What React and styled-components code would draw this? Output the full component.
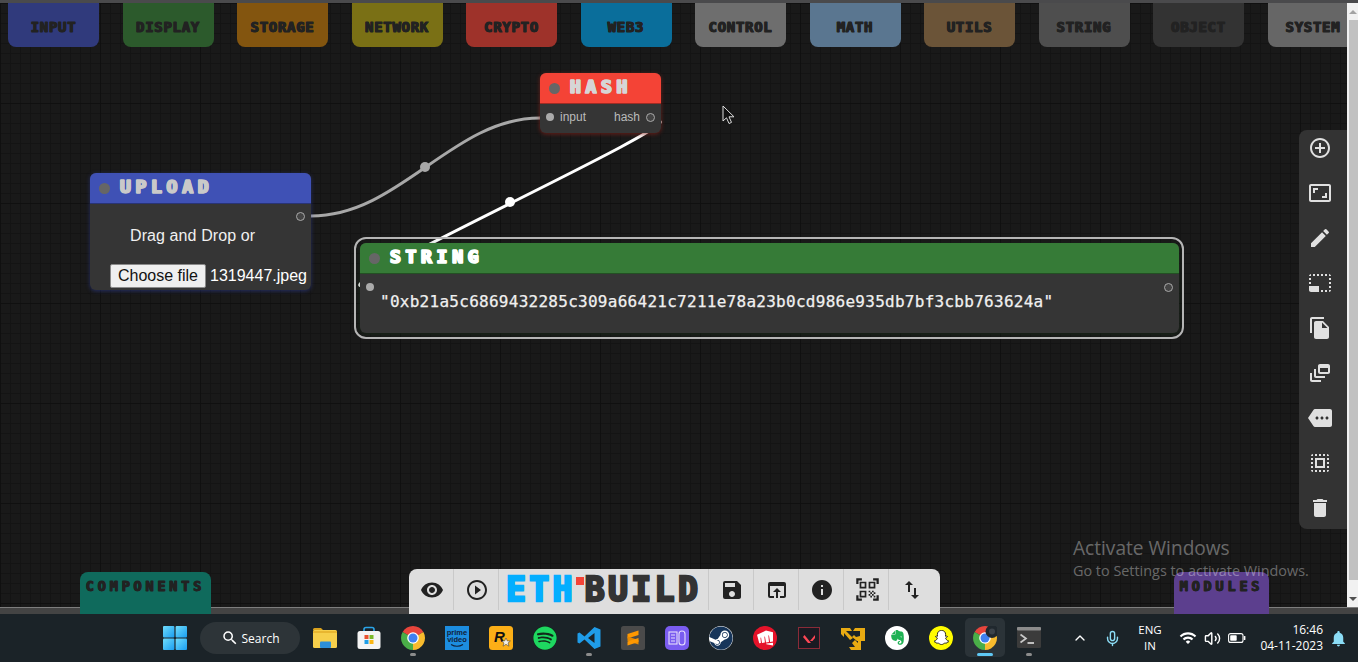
import styled, { createGlobalStyle } from "styled-components";
import {
  MdAddCircleOutline,
  MdAspectRatio,
  MdEdit,
  MdPhotoSizeSelectSmall,
  MdFileCopy,
  MdDynamicFeed,
  MdMore,
  MdSelectAll,
  MdDelete,
  MdRemoveRedEye,
  MdPlayCircleOutline,
  MdSave,
  MdOpenInBrowser,
  MdInfo,
  MdQrCodeScanner,
  MdImportExport,
  MdNotifications,
  MdSearch,
  MdWifi,
} from "react-icons/md";
import { FaSpotify, FaSteam, FaEvernote, FaSnapchatGhost } from "react-icons/fa";
import { SiRiotgames } from "react-icons/si";
import { LuChevronUp, LuMic, LuVolume2 } from "react-icons/lu";

const CATEGORIES = [
  ["INPUT", "#303a7c"],
  ["DISPLAY", "#2c5a2c"],
  ["STORAGE", "#83550f"],
  ["NETWORK", "#7a7015"],
  ["CRYPTO", "#9e322a"],
  ["WEB3", "#0a6e9b"],
  ["CONTROL", "#6e6e6e"],
  ["MATH", "#5a7690"],
  ["UTILS", "#6b5438"],
  ["STRING", "#4e4e4e"],
  ["OBJECT", "#333333"],
  ["SYSTEM", "#666666"],
];

const SIDE_TOOLS = [
  MdAddCircleOutline,
  MdAspectRatio,
  MdEdit,
  MdPhotoSizeSelectSmall,
  MdFileCopy,
  MdDynamicFeed,
  MdMore,
  MdSelectAll,
  MdDelete,
];

const GlobalStyle = createGlobalStyle`
  html, body {
    margin: 0;
    height: 100%;
    overflow: hidden;
    background: #1a1a1a;
    font-family: "Liberation Sans", Arial, sans-serif;
  }
  * { box-sizing: border-box; }
`;

function ChromeIcon({ badge }) {
  return (
    <svg width="24" height="24" viewBox="0 0 24 24">
      <path d="M12 12L1.61 6A12 12 0 0 1 22.39 6Z" fill="#e8453c" />
      <path d="M12 12L22.39 6A12 12 0 0 1 12 24Z" fill="#f9bb2d" />
      <path d="M12 12L12 24A12 12 0 0 1 1.61 6Z" fill="#4aae48" />
      <circle cx="12" cy="12" r="5.8" fill="#fff" />
      <circle cx="12" cy="12" r="4.5" fill="#3f80f0" />
      {badge && <circle cx="19" cy="5.5" r="6.5" fill="#20282e" />}
      {badge && <circle cx="19" cy="5.5" r="3" fill="#3c434a" />}
    </svg>
  );
}

function WindowsLogo() {
  return (
    <svg width="24" height="24" viewBox="0 0 24 24">
      <defs>
        <linearGradient id="winTile" x1="0" y1="0" x2="1" y2="1">
          <stop offset="0" stopColor="#6fdcfb" />
          <stop offset="1" stopColor="#1a9df0" />
        </linearGradient>
      </defs>
      <rect x="0" y="0" width="11.4" height="11.4" rx="1" fill="url(#winTile)" />
      <rect x="12.6" y="0" width="11.4" height="11.4" rx="1" fill="url(#winTile)" />
      <rect x="0" y="12.6" width="11.4" height="11.4" rx="1" fill="url(#winTile)" />
      <rect x="12.6" y="12.6" width="11.4" height="11.4" rx="1" fill="url(#winTile)" />
    </svg>
  );
}

function FolderIcon() {
  return (
    <svg width="24" height="24" viewBox="0 0 24 24">
      <path d="M0 3.5A1.5 1.5 0 0 1 1.5 2H8l2.5 2.5H0Z" fill="#d9a21e" />
      <rect x="0" y="4" width="24" height="18" rx="1.5" fill="#f6cf4b" />
      <rect x="0" y="5" width="24" height="2" fill="#e8b630" />
      <rect x="7" y="15.5" width="11" height="6.5" rx="1" fill="#2d8fd8" />
    </svg>
  );
}

function StoreIcon() {
  return (
    <svg width="24" height="24" viewBox="0 0 24 24">
      <path d="M7 7V3.5A2 2 0 0 1 9 1.5H15A2 2 0 0 1 17 3.5V7" fill="none" stroke="#2aa4e8" strokeWidth="1.6" />
      <rect x="0.5" y="5" width="23" height="18" rx="2.5" fill="#f4f4f4" />
      <rect x="7.5" y="9" width="4" height="4" fill="#e8512f" />
      <rect x="12.5" y="9" width="4" height="4" fill="#7ab92a" />
      <rect x="7.5" y="14" width="4" height="4" fill="#1f9ee8" />
      <rect x="12.5" y="14" width="4" height="4" fill="#fbb714" />
    </svg>
  );
}

function PrimeIcon() {
  return (
    <svg width="24" height="24" viewBox="0 0 24 24">
      <rect width="24" height="24" fill="#1c8de0" />
      <text x="12" y="9" textAnchor="middle" fontSize="7.5" fontWeight="700" fill="#10203a" fontFamily="Liberation Sans">prime</text>
      <text x="12" y="16" textAnchor="middle" fontSize="7.5" fontWeight="700" fill="#10203a" fontFamily="Liberation Sans">video</text>
      <path d="M6 18.5Q12 22 18 18.5" fill="none" stroke="#10203a" strokeWidth="1.2" />
    </svg>
  );
}

function RockstarIcon() {
  return (
    <svg width="24" height="24" viewBox="0 0 24 24">
      <rect width="24" height="24" rx="3.5" fill="#fcaf17" />
      <text x="5" y="16" fontSize="15" fontWeight="700" fontStyle="italic" fill="#111" fontFamily="Liberation Sans">R</text>
      <path d="M17 12l1.4 3h3l-2.4 2 1 3.2-3-1.9-3 1.9 1-3.2-2.4-2h3Z" fill="#f4f0e6" stroke="#333" strokeWidth=".5" />
    </svg>
  );
}

function VsCodeIcon() {
  return (
    <svg width="24" height="24" viewBox="0 0 24 24">
      <path d="M17.5 1L23.5 3.5V20.5L17.5 23L7.5 13.5L2.5 17.5L0.5 16.5V7.5L2.5 6.5L7.5 10.5ZM17.5 7L11 12L17.5 17Z" fill="#1f9ce8" fillRule="evenodd" />
    </svg>
  );
}

function SublimeIcon() {
  return (
    <svg width="24" height="24" viewBox="0 0 24 24">
      <rect width="24" height="24" rx="2.5" fill="#4a4a4a" />
      <path d="M17.5 4.5V9L6.5 12.5V8Z" fill="#ff9800" />
      <path d="M6.5 10.5L17.5 14V18.5L6.5 15Z" fill="#e98a00" />
      <path d="M17.5 12V16L6.5 19.5V15.5Z" fill="#ff9800" />
    </svg>
  );
}

function PurpleAppIcon() {
  return (
    <svg width="24" height="24" viewBox="0 0 24 24">
      <rect width="24" height="24" rx="5" fill="#7a5cf0" />
      <rect x="4" y="6" width="8" height="12" fill="none" stroke="#e6defc" strokeWidth="1.1" />
      <rect x="14" y="5" width="6" height="14" rx="3" fill="none" stroke="#e6defc" strokeWidth="1.1" />
      <path d="M6 9h4M6 12h4M6 15h4" stroke="#e6defc" strokeWidth="1.1" />
    </svg>
  );
}

function ValorantIcon() {
  return (
    <svg width="24" height="24" viewBox="0 0 24 24">
      <rect x=".5" y=".5" width="21" height="21" fill="#1a1a22" stroke="#8a2b38" transform="translate(1 1)" />
      <path d="M6 10L11 16H14L7.5 8Z" fill="#ff4655" transform="translate(0 1)" />
      <path d="M18 8L13 14H15.5L18 11Z" fill="#ff4655" transform="translate(0 1)" />
    </svg>
  );
}

function PinwheelIcon() {
  return (
    <svg width="24" height="24" viewBox="0 0 24 24" fill="#e8aa12">
      <path d="M0 2H9L11 5H5L12 12L9 14L3 7V11L0 8Z" />
      <path d="M24 2H14L12 5H19V10L15 11L13 9L11 11L16 15H24Z" />
      <path d="M14 14L17 17V12L20 13V24H10L8 21H14L11 17Z" />
    </svg>
  );
}

function TerminalIcon() {
  return (
    <svg width="24" height="24" viewBox="0 0 24 24">
      <rect y="1" width="24" height="21" rx="1.5" fill="#3b3b3b" />
      <rect y="1" width="24" height="3.5" rx="1" fill="#8c8c8c" />
      <path d="M3.5 8.5L9 12.5L3.5 16.5" fill="none" stroke="#c8c8c8" strokeWidth="1.7" />
      <path d="M10.5 17H17" stroke="#e0e0e0" strokeWidth="1.6" />
    </svg>
  );
}

function BatteryIcon() {
  return (
    <svg width="18" height="12" viewBox="0 0 18 12">
      <rect x=".6" y="1.6" width="14.4" height="8.8" rx="2" fill="none" stroke="#fff" strokeWidth="1.1" />
      <rect x="2.2" y="3.2" width="6.5" height="5.6" rx=".8" fill="#fff" />
      <rect x="15.8" y="4" width="1.6" height="4" rx=".6" fill="#fff" />
    </svg>
  );
}

function PointerIcon() {
  return (
    <svg width="14" height="20" viewBox="0 0 14 20">
      <path d="M1 1V16L4.5 12.8L7 18.5L9.5 17.4L7 11.8H12Z" fill="#111" stroke="#ddd" strokeWidth="1" />
    </svg>
  );
}

function taskbarApps() {
  return [
    { key: "files", icon: <FolderIcon /> },
    { key: "store", icon: <StoreIcon /> },
    { key: "chrome", icon: <ChromeIcon />, running: true },
    { key: "prime", icon: <PrimeIcon /> },
    { key: "rockstar", icon: <RockstarIcon /> },
    { key: "spotify", icon: <Badge $round $bg="#12291a" $color="#1ed760"><FaSpotify size={24} /></Badge> },
    { key: "vscode", icon: <VsCodeIcon />, running: true },
    { key: "sublime", icon: <SublimeIcon /> },
    { key: "purple", icon: <PurpleAppIcon /> },
    { key: "steam", icon: <Badge $round $bg="#fff" $color="#16355a"><FaSteam size={24} /></Badge> },
    { key: "riot", icon: <Badge $round $bg="#e5132a" $color="#fff"><SiRiotgames size={16} /></Badge> },
    { key: "valorant", icon: <ValorantIcon /> },
    { key: "vmware", icon: <PinwheelIcon /> },
    { key: "evernote", icon: <Badge $round $bg="#fff" $color="#1fb254"><FaEvernote size={17} /></Badge> },
    { key: "snapchat", icon: <Badge $round $bg="#fffc00" $color="#fff" $outline><FaSnapchatGhost size={15} /></Badge> },
    { key: "chrome2", icon: <ChromeIcon badge />, active: true },
    { key: "terminal", icon: <TerminalIcon />, running: true },
  ];
}

export default function App() {
  return (
    <Page>
      <GlobalStyle />
      <TopEdge />
      <Middle>
        <Canvas>
          <TabRow>
            {CATEGORIES.map(([name, color]) => (
              <CategoryTab key={name} $bg={color}>{name}</CategoryTab>
            ))}
          </TabRow>

          <Wires width="1347" height="604" viewBox="0 3 1347 604">
            <path d="M311 216C400 216 452 118 540 118" fill="none" stroke="#a8a8a8" strokeWidth="3" />
            <circle cx="425" cy="167" r="5" fill="#a8a8a8" />
            <path d="M658 121C692 121 328 286 362 286" fill="none" stroke="#fff" strokeWidth="3" strokeLinecap="round" />
            <circle cx="510" cy="202" r="5" fill="#fff" />
          </Wires>

          <Node $left={90} $top={170} $width={221} $glow="rgba(45, 60, 150, 0.6)">
            <NodeHeader $bg="#3f51b5">
              <HeaderDot />
              <NodeTitle $color="#c9c9c9">UPLOAD</NodeTitle>
            </NodeHeader>
            <UploadBody>
              <SlotRow $align="flex-end">
                <Slot $out />
              </SlotRow>
              <DropHint>Drag and Drop or</DropHint>
              <FileRow>
                <FileButton type="button">Choose file</FileButton>
                <FileName>1319447.jpeg</FileName>
              </FileRow>
            </UploadBody>
          </Node>

          <Node $left={540} $top={70} $width={121} $glow="rgba(130, 35, 28, 0.8)">
            <NodeHeader $bg="#f44336">
              <HeaderDot />
              <NodeTitle $color="#d6d6d6">HASH</NodeTitle>
            </NodeHeader>
            <HashBody>
              <Slot />
              <SlotLabel>input</SlotLabel>
              <SlotLabel $right>hash</SlotLabel>
              <Slot $out />
            </HashBody>
          </Node>

          <SelectedNode $left={360} $top={240} $width={819} $glow="rgba(30, 60, 30, 0.5)">
            <NodeHeader $bg="#367b37">
              <HeaderDot />
              <NodeTitle $color="#fff">STRING</NodeTitle>
            </NodeHeader>
            <StringBody>
              <SlotRow $align="space-between">
                <Slot />
                <Slot $out />
              </SlotRow>
              <StringValue>"0xb21a5c6869432285c309a66421c7211e78a23b0cd986e935db7bf3cbb763624a"</StringValue>
            </StringBody>
          </SelectedNode>

          <Pointer><PointerIcon /></Pointer>

          <SideTools>
            {SIDE_TOOLS.map((Icon, i) => (
              <Icon key={i} size={24} />
            ))}
          </SideTools>
        </Canvas>
        <Scrollbar>
          <ScrollArrow $up />
          <ScrollThumb />
          <ScrollArrow />
        </Scrollbar>
      </Middle>

      <Strip>
        <DrawerTab $bg="#0f6a5c" $width={131} $gap={80}>COMPONENTS</DrawerTab>
        <Dock>
          <DockCell><MdRemoveRedEye size={24} /></DockCell>
          <DockCell><MdPlayCircleOutline size={24} /></DockCell>
          <Logo>
            <LogoEth>ETH</LogoEth>
            <LogoDot />
            <LogoBuild>BUILD</LogoBuild>
          </Logo>
          <DockCell><MdSave size={24} /></DockCell>
          <DockCell><MdOpenInBrowser size={24} /></DockCell>
          <DockCell><MdInfo size={24} /></DockCell>
          <DockCell><MdQrCodeScanner size={27} /></DockCell>
          <DockCell $last><MdImportExport size={24} /></DockCell>
        </Dock>
        <DrawerTab $bg="#5c3f8e" $width={95} $gap={234}>MODULES</DrawerTab>
      </Strip>

      <Taskbar>
        <StartSlot><WindowsLogo /></StartSlot>
        <SearchPill>
          <MdSearch size={18} />
          <span>Search</span>
        </SearchPill>
        <Apps>
          {taskbarApps().map((app) => (
            <AppSlot key={app.key} $running={app.running} $active={app.active}>
              {app.icon}
            </AppSlot>
          ))}
        </Apps>
        <Tray>
          <TrayItem $width={16} $gap={21}><LuChevronUp size={16} /></TrayItem>
          <TrayItem $width={16} $gap={16} $color="#8bdcf5"><LuMic size={17} /></TrayItem>
          <LangBlock>ENG<br />IN</LangBlock>
          <TrayItem $width={18} $gap={9}><MdWifi size={18} /></TrayItem>
          <TrayItem $width={16} $gap={7}><LuVolume2 size={17} /></TrayItem>
          <TrayItem $width={18} $gap={7}><BatteryIcon /></TrayItem>
          <Clock>16:46<br />04-11-2023</Clock>
          <TrayItem $width={16} $gap={6} $color="#8bdcf5"><MdNotifications size={19} /></TrayItem>
        </Tray>
      </Taskbar>

      <Watermark>
        <WatermarkTitle>Activate Windows</WatermarkTitle>
        <WatermarkHint>Go to Settings to activate Windows.</WatermarkHint>
      </Watermark>
    </Page>
  );
}

const Page = styled.div`
  position: relative;
  display: flex;
  flex-direction: column;
  height: 100vh;
  overflow: hidden;
`;

const TopEdge = styled.div`
  flex: 0 0 3px;
  background: #4a4a4c;
`;

const Middle = styled.div`
  flex: 1;
  display: flex;
  min-height: 0;
`;

const Canvas = styled.main`
  position: relative;
  flex: 1;
  overflow: hidden;
  background-color: #191919;
  background-image:
    linear-gradient(#101010 1px, transparent 1px),
    linear-gradient(90deg, #101010 1px, transparent 1px),
    linear-gradient(#141414 1px, transparent 1px),
    linear-gradient(90deg, #141414 1px, transparent 1px);
  background-size: 100px 100px, 100px 100px, 10px 10px, 10px 10px;
`;

const TabRow = styled.nav`
  display: flex;
  gap: 23.5px;
  padding-left: 8px;
`;

const CategoryTab = styled.div`
  flex: 0 0 91px;
  height: 44px;
  padding-top: 14px;
  border-radius: 0 0 8px 8px;
  background: ${(p) => p.$bg};
  color: #222;
  font: 700 14px/20px "DejaVu Sans Mono", monospace;
  -webkit-text-stroke: 0.9px #222;
  text-shadow: 0.5px 0 #222, -0.5px 0 #222;
  text-align: center;
  letter-spacing: 0.7px;
`;

const Wires = styled.svg`
  position: absolute;
  left: 0;
  top: 0;
`;

const Node = styled.section`
  position: absolute;
  left: ${(p) => p.$left}px;
  top: ${(p) => p.$top}px;
  width: ${(p) => p.$width}px;
  border-radius: 6px;
  background: #353535;
  box-shadow: 0 1px 4px ${(p) => p.$glow};
`;

const SelectedNode = styled(Node)`
  &::before {
    content: "";
    position: absolute;
    inset: -6px -5px -6px -6px;
    border: 2px solid #b5b5b5;
    border-radius: 12px;
  }
`;

const NodeHeader = styled.header`
  position: relative;
  display: flex;
  align-items: center;
  height: 31px;
  padding-left: 9px;
  border-radius: 6px 6px 0 0;
  background: ${(p) => p.$bg};
  border-bottom: 1px solid rgba(0, 0, 0, 0.35);
`;

const HeaderDot = styled.span`
  flex: 0 0 11px;
  height: 11px;
  margin-top: 1px;
  border-radius: 50%;
  background: #666;
`;

const NodeTitle = styled.h3`
  margin: 0 0 2px 10px;
  color: ${(p) => p.$color};
  font: 700 18px/22px "DejaVu Sans Mono", monospace;
  letter-spacing: 4.7px;
  -webkit-text-stroke: 1.6px ${(p) => p.$color};
  text-shadow: 1px 0 ${(p) => p.$color}, -1px 0 ${(p) => p.$color};
`;

const Slot = styled.span`
  flex: 0 0 ${(p) => (p.$out ? 9 : 8)}px;
  width: ${(p) => (p.$out ? 9 : 8)}px;
  height: ${(p) => (p.$out ? 9 : 8)}px;
  border-radius: 50%;
  background: ${(p) => (p.$out ? "#444" : "#aaa")};
  border: ${(p) => (p.$out ? "1.5px solid #aaa" : "none")};
`;

const SlotRow = styled.div`
  display: flex;
  justify-content: ${(p) => p.$align};
`;

const UploadBody = styled.div`
  display: flex;
  flex-direction: column;
  height: 86px;
  padding: 8px 6px 2px 20px;
  color: #f0f0f0;
`;

const DropHint = styled.div`
  margin: 6px 0 0 20px;
  font-size: 16px;
  line-height: 18px;
  letter-spacing: 0.1px;
`;

const FileRow = styled.div`
  display: flex;
  align-items: center;
  gap: 4px;
  margin-top: auto;
  white-space: nowrap;
`;

const FileButton = styled.button`
  flex: 0 0 96px;
  height: 24px;
  padding: 0;
  border: 1px solid #8a8a8a;
  border-radius: 2px;
  background: #efefef;
  color: #111;
  font: 16px "Liberation Sans", Arial, sans-serif;
`;

const FileName = styled.span`
  color: #fff;
  font-size: 16px;
`;

const HashBody = styled.div`
  display: flex;
  align-items: center;
  height: 29px;
  padding: 0 6px 3px 6px;
  border-radius: 0 0 6px 6px;
  font-size: 12px;
  gap: 6px;
`;

const SlotLabel = styled.span`
  color: #bbb;
  margin-left: ${(p) => (p.$right ? "auto" : "0")};
`;

const StringBody = styled.div`
  height: 59px;
  padding: 9px 6px 0 6px;
`;

const StringValue = styled.div`
  margin: 0 0 0 14px;
  color: #f0f0f0;
  font: 16px/20px "DejaVu Sans Mono", monospace;
  letter-spacing: 0.27px;
  -webkit-text-stroke: 0.25px #f0f0f0;
  white-space: nowrap;
`;

const Pointer = styled.div`
  position: absolute;
  left: 722px;
  top: 102px;
  line-height: 0;
`;

const SideTools = styled.aside`
  position: absolute;
  right: 0;
  top: 127px;
  display: flex;
  flex-direction: column;
  gap: 21px;
  width: 48px;
  height: 399px;
  padding: 6px 0 0 9px;
  border-radius: 8px 0 0 8px;
  background: #333;
  color: #e0e0e0;
`;

const Scrollbar = styled.div`
  flex: 0 0 11px;
  display: flex;
  flex-direction: column;
  background: #f1f1f1;
`;

const ScrollArrow = styled.div`
  flex: 0 0 17px;
  display: flex;
  align-items: center;
  justify-content: center;
  &::after {
    content: "";
    border-left: 4px solid transparent;
    border-right: 4px solid transparent;
    ${(p) => (p.$up ? "border-bottom: 4px solid #a3a3a3;" : "border-top: 4px solid #505050;")}
  }
`;

const ScrollThumb = styled.div`
  flex: 1;
  margin-bottom: 10px;
  margin-left: 2px;
  background: #c1c1c1;
`;

const Strip = styled.footer`
  position: relative;
  z-index: 2;
  flex: 0 0 7px;
  min-height: 0;
  height: 7px;
  display: flex;
  align-items: flex-end;
  border-top: 1px solid #7d7d7d;
  background: #444;
`;

const DrawerTab = styled.div`
  flex: 0 0 ${(p) => p.$width}px;
  height: 42px;
  margin-left: ${(p) => p.$gap}px;
  padding-top: 5px;
  border-radius: 8px 8px 0 0;
  background: ${(p) => p.$bg};
  color: #222;
  font: 700 13.5px/18px "DejaVu Sans Mono", monospace;
  letter-spacing: 3.8px;
  -webkit-text-stroke: 0.8px #222;
  text-shadow: 0.5px 0 #222, -0.5px 0 #222;
  text-align: center;
  white-space: nowrap;
`;

const Dock = styled.div`
  flex: 0 0 531px;
  height: 45px;
  margin-left: 198px;
  display: flex;
  border-radius: 8px 8px 0 0;
  background: #dedede;
  color: #222;
`;

const DockCell = styled.div`
  flex: 0 0 ${(p) => (p.$last ? 49 : 45)}px;
  display: flex;
  align-items: center;
  justify-content: center;
  height: 41px;
  padding: ${(p) => (p.$last ? "0 3px 0 0" : "0 0 0 2px")};
  border-right: ${(p) => (p.$last ? "none" : "1px solid #c9c9c9")};
`;

const Logo = styled.div`
  flex: 0 0 210px;
  display: flex;
  height: 41px;
  padding: 8px 0 0 7px;
  border-right: 1px solid #c9c9c9;
  font: 700 33px/25px "DejaVu Sans Mono", monospace;
  letter-spacing: 3.4px;
`;

const LogoEth = styled.span`
  color: #03aeff;
  -webkit-text-stroke: 2.4px #03aeff;
  text-shadow: 1px 0 #03aeff;
`;

const LogoDot = styled.span`
  flex: 0 0 8px;
  height: 8px;
  margin-right: 1px;
  background: #f44336;
`;

const LogoBuild = styled.span`
  color: #333;
  -webkit-text-stroke: 2.4px #333;
  text-shadow: 1px 0 #333;
`;

const Taskbar = styled.div`
  flex: 0 0 48px;
  display: flex;
  align-items: center;
  padding-left: 163px;
  background: #1b2328;
  color: #fff;
  font-family: "Open Sans", sans-serif;
`;

const StartSlot = styled.div`
  flex: 0 0 24px;
  height: 24px;
`;

const SearchPill = styled.div`
  flex: 0 0 100px;
  height: 32px;
  margin-left: 13px;
  display: flex;
  align-items: center;
  justify-content: center;
  gap: 3px;
  border-radius: 16px;
  background: #2d3438;
  font-size: 12px;
`;

const Apps = styled.div`
  display: flex;
  margin-left: 3px;
`;

const AppSlot = styled.div`
  position: relative;
  flex: 0 0 44px;
  height: 48px;
  display: flex;
  align-items: center;
  justify-content: center;
  &::before {
    content: "";
    display: ${(p) => (p.$active ? "block" : "none")};
    position: absolute;
    left: 2px;
    right: 2px;
    top: 4px;
    bottom: 5px;
    border-radius: 5px;
    background: #2b3338;
  }
  &::after {
    content: "";
    display: ${(p) => (p.$running || p.$active ? "block" : "none")};
    position: absolute;
    bottom: 6px;
    left: 50%;
    width: ${(p) => (p.$active ? 16 : 6)}px;
    height: 3px;
    margin-left: ${(p) => (p.$active ? -8 : -3)}px;
    border-radius: 2px;
    background: ${(p) => (p.$active ? "#5fc8f5" : "#8c8c8c")};
  }
  & > * {
    position: relative;
    margin-top: -1px;
  }
`;

const Badge = styled.div`
  width: 24px;
  height: 24px;
  display: flex;
  align-items: center;
  justify-content: center;
  border-radius: ${(p) => (p.$round ? "50%" : "4px")};
  background: ${(p) => p.$bg};
  color: ${(p) => p.$color};
  ${(p) => (p.$outline ? "filter: drop-shadow(0 0 0.4px #000);" : "")}
  svg { ${(p) => (p.$outline ? "stroke: #111; stroke-width: 30px;" : "")} }
`;

const Tray = styled.div`
  display: flex;
  align-items: center;
`;

const TrayItem = styled.div`
  flex: 0 0 ${(p) => p.$width}px;
  margin-left: ${(p) => p.$gap}px;
  display: flex;
  justify-content: center;
  color: ${(p) => p.$color || "#fff"};
`;

const LangBlock = styled.div`
  flex: 0 0 40px;
  margin-left: 9px;
  font-size: 11.5px;
  line-height: 16px;
  text-align: center;
`;

const Clock = styled.div`
  flex: 0 0 77px;
  font-size: 12px;
  line-height: 16px;
  text-align: right;
`;

const Watermark = styled.div`
  position: absolute;
  z-index: 3;
  left: 1073px;
  top: 536px;
  color: rgba(255, 255, 255, 0.36);
  font-family: "Open Sans", sans-serif;
  pointer-events: none;
  white-space: nowrap;
`;

const WatermarkTitle = styled.div`
  font-size: 19.1px;
  line-height: 24px;
`;

const WatermarkHint = styled.div`
  font-size: 14.4px;
  line-height: 22px;
`;
